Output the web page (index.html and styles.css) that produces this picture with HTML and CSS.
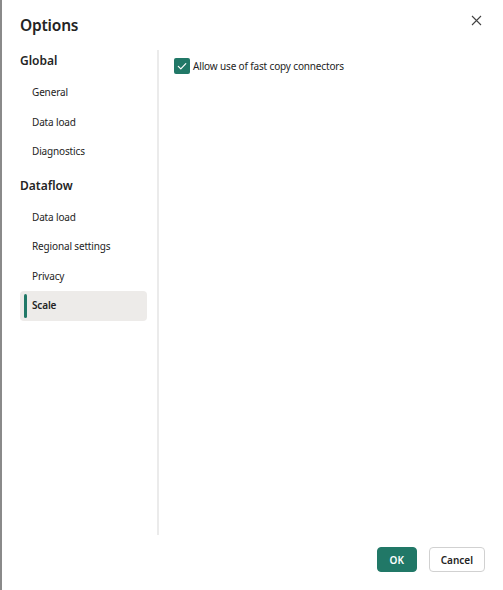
FILE: index.html
```html
<!DOCTYPE html>
<html lang="en">
<head>
  <meta charset="UTF-8" />
  <meta name="viewport" content="width=device-width, initial-scale=1.0"/>
  <title>Options</title>
  <link rel="stylesheet" href="styles.css">
</head>
<body>

  <div class="dialog">
    <header>
      <h1>Options</h1>
      <div class="close-btn" title="Close">
        <svg width="11" height="11" viewBox="0 0 11 11">
          <path d="M1 1 L10 10 M10 1 L1 10" stroke="#424242" stroke-width="1.1" fill="none" />
        </svg>
      </div>
    </header>

    <div class="main">
      <nav class="side-nav">
        <div class="nav-title">Global</div>
        <div class="nav-item">General</div>
        <div class="nav-item">Data load</div>
        <div class="nav-item">Diagnostics</div>

        <div class="nav-title second">Dataflow</div>
        <div class="nav-item">Data load</div>
        <div class="nav-item">Regional settings</div>
        <div class="nav-item">Privacy</div>
        <div class="nav-item active">Scale</div>
      </nav>

      <div class="content">
        <label class="check-row">
          <span class="checkbox">
            <svg width="12" height="12" viewBox="0 0 12 12">
              <path d="M2.3 6.3 L4.8 8.8 L9.8 3.6" stroke="white" stroke-width="1.2" fill="none" stroke-linecap="round" stroke-linejoin="round" />
            </svg>
          </span>
          Allow use of fast copy connectors
        </label>
      </div>
    </div>

    <footer>
      <button class="btn primary">OK</button>
      <button class="btn">Cancel</button>
    </footer>
  </div>

</body>
</html>
```

FILE: styles.css
```css
body {
  margin: 0;
  font-family: 'Segoe UI', 'Noto Sans', sans-serif;
  background-color: white;
  color: #242424;
}

.dialog {
  width: 503px;
  height: 590px;
  box-sizing: border-box;
  border-left: 2px solid #8a8a8a;
  display: flex;
  flex-direction: column;
}

header {
  height: 50px;
  padding: 0 18px 0 18px;
  display: flex;
  align-items: center;
  justify-content: space-between;
  flex-shrink: 0;
}

header h1 {
  margin: 0;
  font-size: 15.5px;
  font-weight: 600;
  letter-spacing: -0.2px;
}

.close-btn {
  align-self: flex-start;
  margin-top: 15px;
  margin-right: 3px;
  width: 11px;
  height: 11px;
  cursor: pointer;
}

.close-btn svg {
  display: block;
}

.main {
  height: 485px;
  display: flex;
  flex-shrink: 0;
}

.side-nav {
  width: 127px;
  padding: 1px 10px 0 18px;
}

.nav-title {
  font-size: 12px;
  font-weight: 600;
  line-height: 20px;
  margin-bottom: 7px;
}

.nav-title.second {
  margin-top: 9px;
}

.nav-item {
  height: 29.5px;
  line-height: 29.5px;
  padding-left: 12px;
  font-size: 10px;
  letter-spacing: -0.15px;
  border-radius: 4px;
  position: relative;
  cursor: pointer;
}

.nav-item.active {
  background-color: #edebe9;
  font-weight: 600;
}

.nav-item.active::before {
  content: "";
  position: absolute;
  left: 4px;
  top: 3px;
  bottom: 3px;
  width: 3px;
  border-radius: 2px;
  background-color: #217867;
}

.content {
  flex-grow: 1;
  border-left: 2px solid #ebebeb;
  padding: 8px 0 0 15px;
}

.check-row {
  display: flex;
  align-items: center;
  gap: 3px;
  font-size: 10px;
  letter-spacing: -0.15px;
  cursor: pointer;
}

.checkbox {
  width: 16px;
  height: 16px;
  border-radius: 2px;
  background-color: #217867;
  display: flex;
  align-items: center;
  justify-content: center;
}

.checkbox svg {
  display: block;
}

footer {
  flex-grow: 1;
  display: flex;
  justify-content: flex-end;
  align-items: flex-start;
  gap: 12px;
  padding: 12px 18px 0 0;
}

.btn {
  height: 25px;
  min-width: 40px;
  padding: 0 11px;
  font-family: inherit;
  font-size: 10px;
  border: 1px solid #d1d1d1;
  border-radius: 4px;
  background-color: white;
  color: #242424;
  font-weight: 600;
  cursor: pointer;
}

.btn.primary {
  background-color: #217867;
  border-color: #217867;
  color: white;
}
```
